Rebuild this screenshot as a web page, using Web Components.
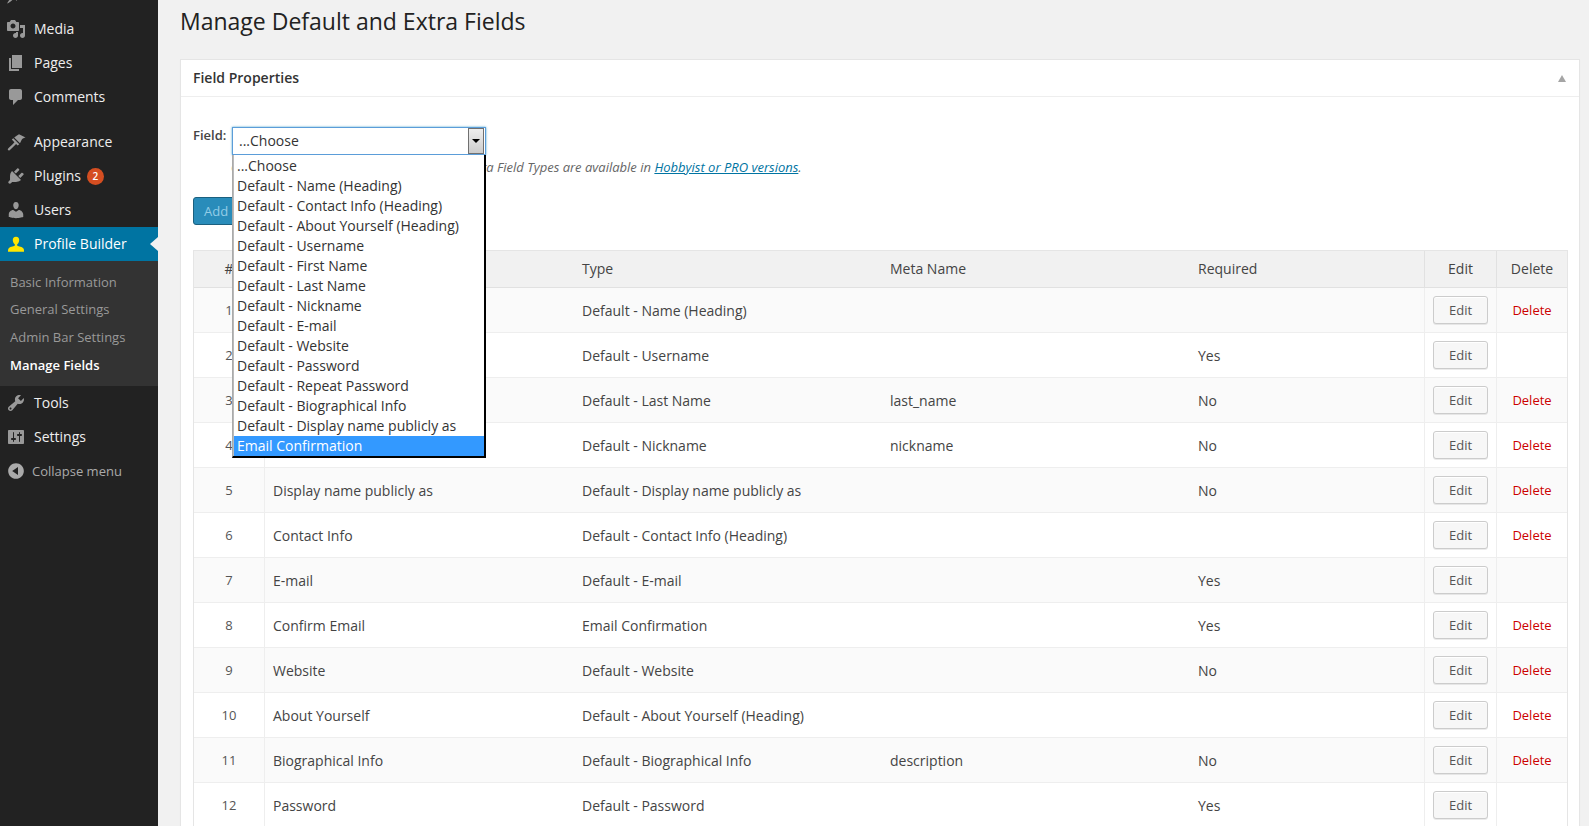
<!doctype html>
<html><head><meta charset="utf-8"><title>Manage Fields</title>
<style>
html,body{margin:0;padding:0;height:826px;overflow:hidden;background:#f1f1f1;font-family:"Open Sans",sans-serif;font-size:14px;color:#444}
</style></head><body>
<wp-admin>
  <wp-sidebar>
    <wp-menu-item icon="post"></wp-menu-item>
    <wp-menu-item icon="media">Media</wp-menu-item>
    <wp-menu-item icon="page">Pages</wp-menu-item>
    <wp-menu-item icon="comment">Comments</wp-menu-item>
    <wp-menu-item icon="appearance" sep>Appearance</wp-menu-item>
    <wp-menu-item icon="plugin" badge="2">Plugins</wp-menu-item>
    <wp-menu-item icon="users">Users</wp-menu-item>
    <wp-menu-item icon="profile" active>Profile Builder</wp-menu-item>
    <wp-submenu>
      <wp-sub-item>Basic Information</wp-sub-item>
      <wp-sub-item>General Settings</wp-sub-item>
      <wp-sub-item>Admin Bar Settings</wp-sub-item>
      <wp-sub-item current>Manage Fields</wp-sub-item>
    </wp-submenu>
    <wp-menu-item icon="tools">Tools</wp-menu-item>
    <wp-menu-item icon="settings">Settings</wp-menu-item>
    <wp-menu-item icon="collapse" small>Collapse menu</wp-menu-item>
  </wp-sidebar>
  <wp-main>
    <span slot="title">Manage Default and Extra Fields</span>
    <wp-card>
      <span slot="title">Field Properties</span>
      <pb-field-form></pb-field-form>
      <pb-table></pb-table>
    </wp-card>
  </wp-main>
</wp-admin>
<script>
const P={
post:"M10.44 3.02l1.82-1.82 6.36 6.35-1.83 1.82c-1.05-.68-2.48-.57-3.41.36l-.75.75c-.92.93-1.04 2.35-.35 3.41l-1.83 1.82-2.41-2.41-2.8 2.79c-.42.42-3.38 2.71-3.8 2.29s1.86-3.39 2.28-3.81l2.79-2.79L4.1 9.36l1.83-1.82c1.05.69 2.48.57 3.4-.36l.75-.75c.93-.92 1.05-2.35.37-3.41z",
media:"M13 11V4c0-.55-.45-1-1-1h-1.67L9 1H5L3.67 3H2c-.55 0-1 .45-1 1v7c0 .55.45 1 1 1h10c.55 0 1-.45 1-1zM7 4.5c1.38 0 2.5 1.12 2.5 2.5S8.38 9.5 7 9.5 4.5 8.38 4.5 7 5.62 4.5 7 4.5zM14 6h5v10.5c0 1.38-1.12 2.5-2.5 2.5S14 17.88 14 16.5s1.12-2.5 2.5-2.5c.17 0 .34.02.5.05V9h-3V6zm-4 8.05V13h2v3.5c0 1.38-1.12 2.5-2.5 2.5S7 17.88 7 16.5 8.12 14 9.5 14c.17 0 .34.02.5.05z",
page:"M6 15V2h10v13H6zm-1 1h8v2H3V5h2v11z",
comment:"M5 2h9c1.1 0 2 .9 2 2v7c0 1.1-.9 2-2 2h-2l-5 5v-5H5c-1.1 0-2-.9-2-2V4c0-1.1.9-2 2-2z",
appearance:"M13 2.2l6.6 3.2c-1.5.5-2.900.6-3.900 2.400L14 11.300 8.200 5.500 11 3.600zM7.300 6.200l6 6-1.700 1.300-1.500-1.400-1.500 1.300c-1.600 1.400-3.500 3.700-5 4.900-.9.800-2.400-.6-1.600-1.500 1.300-1.600 3.700-3.500 5.100-5.100l1.300-1.400-2.600-2.900z",
plugin:"M13.11 4.36L9.87 7.6 8 5.73l3.24-3.24c.35-.34 1.05-.2 1.56.32.52.51.66 1.21.31 1.55zm-8 1.77l.91-1.12 9.01 9.01-1.19.84c-.71.71-2.63 1.16-3.82 1.16H6.14L4.9 17.26c-.59.59-1.54.59-2.12 0-.59-.58-.59-1.53 0-2.12l1.24-1.24v-3.88c0-1.13.4-3.19 1.09-3.89zm7.26 3.97l3.24-3.24c.34-.35 1.04-.21 1.55.31.52.51.66 1.21.31 1.55l-3.24 3.25z",
users:"M10 9.25c-2.27 0-2.73-3.44-2.73-3.44C7 4.02 7.82 2 9.97 2c2.16 0 2.98 2.02 2.71 3.81 0 0-.41 3.44-2.68 3.44zm0 2.57L12.72 10c2.39 0 4.52 2.33 4.52 4.53v2.49s-3.65 1.13-7.24 1.13c-3.65 0-7.24-1.13-7.24-1.13v-2.49c0-2.25 1.94-4.48 4.47-4.48z",
profile:"M10 2.700c2.200 0 3.400 1.700 3.200 3.800-.2 1.900-1.200 3.200-2 3.800v1.300c0 .6 4.300 1.300 5.800 2.300 1 .7 1 2.200 1 3.900H2c0-1.700 0-3.200 1-3.900 1.500-1 5.800-1.700 5.800-2.300v-1.300c-.8-.6-1.800-1.900-2-3.800C6.600 4.400 7.800 2.700 10 2.700z",
tools:"M16.68 9.77c-1.34 1.34-3.3 1.67-4.95.99l-5.41 6.52c-.99.99-2.59.99-3.58 0s-.99-2.59 0-3.57l6.52-5.42c-.68-1.65-.35-3.61.99-4.95 1.28-1.28 3.12-1.62 4.72-1.06l-2.89 2.89 2.82 2.82 2.86-2.87c.53 1.58.18 3.39-1.08 4.65zM3.81 16.21c.4.39 1.04.39 1.43 0 .4-.4.4-1.04 0-1.43-.39-.4-1.03-.4-1.43 0-.39.39-.39 1.03 0 1.43z",
settings:"M18 16V4c0-.55-.45-1-1-1H3c-.55 0-1 .45-1 1v12c0 .55.45 1 1 1h14c.55 0 1-.45 1-1zM8 11h1c.55 0 1 .45 1 1s-.45 1-1 1H8v1.5c0 .28-.22.5-.5.5s-.5-.22-.5-.5V13H6c-.55 0-1-.45-1-1s.45-1 1-1h1V5.5c0-.28.22-.5.5-.5s.5.22.5.5V11zm5-2h-1c-.55 0-1-.45-1-1s.45-1 1-1h1V5.5c0-.28.22-.5.5-.5s.5.22.5.5V7h1c.55 0 1 .45 1 1s-.45 1-1 1h-1v5.5c0 .28-.22.5-.5.5s-.5-.22-.5-.5V9z",
collapse:"M10 2.16c4.33 0 7.84 3.51 7.84 7.84s-3.51 7.84-7.84 7.84S2.16 14.33 2.16 10 5.71 2.16 10 2.16zm2 11.72V6.12L6.18 9.97z"
};
function def(name,css,html){
  customElements.define(name,class extends HTMLElement{
    connectedCallback(){
      if(this.shadowRoot)return;
      const r=this.attachShadow({mode:"open"});
      r.innerHTML="<style>"+css+"</style>"+(typeof html==="function"?html(this):html);
    }
  });
}
def("wp-admin",":host{display:flex;height:826px;overflow:hidden}","<slot></slot>");
def("wp-sidebar",":host{display:block;width:158px;flex:none;background:#222;height:826px;overflow:hidden}.in{margin-top:-22px}","<div class=in><slot></slot></div>");
def("wp-menu-item",
`:host{display:flex;align-items:center;height:34px;color:#eee;font-size:14px;position:relative;padding-left:6px}
:host([sep]){margin-top:11px}
:host([active]){background:#0074a2;color:#fff}
:host([active])::after{content:"";position:absolute;right:0;top:10px;width:0;height:0;border-style:solid;border-color:transparent #f1f1f1 transparent transparent;border-width:7px 8px 7px 0}
svg{width:20px;height:20px;fill:#999;flex:none;margin-right:8px}
.t{margin-top:-2px}
:host([active]) svg{fill:#ffe600}
:host([small]){font-size:13px;color:#aaa}
:host([small]) .t{margin-top:0}
:host([small]) svg{margin-right:6px;fill:#aaa}
.b{display:inline-block;margin-left:6px;width:17px;height:17px;border-radius:50%;background:#d54e21;color:#fff;font-size:10px;line-height:17px;text-align:center;font-weight:600}`,
h=>`<svg viewBox="0 0 20 20"><path fill-rule="evenodd" d="${P[h.getAttribute("icon")]}"/></svg><span class=t><slot></slot></span>${h.hasAttribute("badge")?`<span class=b>${h.getAttribute("badge")}</span>`:""}`);
def("wp-submenu",":host{display:block;background:#333;height:125px;box-sizing:border-box;padding:7px 0 7px}","<slot></slot>");
def("wp-sub-item",":host{display:flex;align-items:center;height:27.5px;padding-left:10px;font-size:13px;color:#999}:host([current]){color:#fff;font-weight:600;margin-top:1px}","<slot></slot>");
def("wp-main",":host{display:block;flex:1;min-width:0;padding:0 9px 0 22px}h2{margin:0;height:59px;box-sizing:border-box;padding-top:3px;font-size:23px;line-height:36px;font-weight:400;color:#222}",'<h2><slot name="title"></slot></h2><slot></slot>');
def("wp-card",`:host{display:block;background:#fff;border:1px solid #e5e5e5;box-shadow:0 1px 1px rgba(0,0,0,.04);position:relative}
header{height:36px;border-bottom:1px solid #eee;display:flex;align-items:center;justify-content:space-between;padding:0 13px 0 12px;font-weight:600;font-size:14px;color:#333}
span{margin-top:-2px}
i{display:block;border:4px solid transparent;border-top:0;border-bottom:7px solid #a5a5a5;width:0;height:0}
.b{padding:0 11px 0 12px}`,
'<header><span><slot name="title"></slot></span><i></i></header><div class=b><slot></slot></div>');
def("pb-field-form",`:host{display:block;height:153px;position:relative;z-index:2;box-sizing:border-box;padding-top:30px}
.top{display:flex;align-items:flex-start}
label{width:39px;font-weight:600;line-height:17px;color:#444;font-size:13px}
.note{margin:-1px 0 0 38px;font-style:italic;font-size:13px;color:#666;line-height:18px;height:18px;white-space:nowrap}
.note a{color:#0074a2;text-decoration:underline}
button{display:block;margin-top:21px;height:28px;padding:0 10px;font:13px "Open Sans",sans-serif;color:#94cde7;background:#298cba;border:1px solid #1b607f;border-radius:3px;box-sizing:border-box}`,
`<div class=top><label>Field:</label><pb-select></pb-select></div>
<div class=note>Choose one of the supported field types. Extra Field Types are available in <a href="#">Hobbyist or PRO versions</a>.</div>
<button>Add Field</button>`);
def("pb-select",`:host{display:block;position:relative;width:254px;height:28px;margin-bottom:4px}
.box{height:28px;box-sizing:border-box;border:1px solid #5b9dd9;box-shadow:0 0 2px rgba(30,140,190,.8);background:#fff;display:flex;justify-content:space-between;align-items:center;padding:0 1px 0 6px;font-size:14px;color:#333}
.box span:first-child{margin-top:-2px}
.arr{width:16px;height:26px;border:1px solid #707070;box-sizing:border-box;background:linear-gradient(#eee,#ccc);display:flex;align-items:center;justify-content:center}
.arr i{display:block;border:4px solid transparent;border-bottom:0;border-top:4px solid #000;width:0;height:0}
.list{position:absolute;left:0;top:28px;width:254px;height:303px;box-sizing:border-box;background:#fff;border:solid #000;border-width:0 2px 2px 1px;border-left-color:#aaa;box-shadow:inset 1px 0 0 #bbb;padding:1px 0 0 1px;font-size:14px;color:#333;z-index:5}
.o{height:20px;line-height:20px;padding-left:3px;white-space:nowrap}
.o.s{background:#3399ff;color:#fff}`,
`<div class=box><span>...Choose</span><span class=arr><i></i></span></div><div class=list>${["...Choose","Default - Name (Heading)","Default - Contact Info (Heading)","Default - About Yourself (Heading)","Default - Username","Default - First Name","Default - Last Name","Default - Nickname","Default - E-mail","Default - Website","Default - Password","Default - Repeat Password","Default - Biographical Info","Default - Display name publicly as"].map(t=>`<div class=o>${t}</div>`).join("")}<div class="o s">Email Confirmation</div></div>`);
const rows=[
["Name","Default - Name (Heading)","","",1],
["Username","Default - Username","","Yes",0],
["Last Name","Default - Last Name","last_name","No",1],
["Nickname","Default - Nickname","nickname","No",1],
["Display name publicly as","Default - Display name publicly as","","No",1],
["Contact Info","Default - Contact Info (Heading)","","",1],
["E-mail","Default - E-mail","","Yes",0],
["Confirm Email","Email Confirmation","","Yes",1],
["Website","Default - Website","","No",1],
["About Yourself","Default - About Yourself (Heading)","","",1],
["Biographical Info","Default - Biographical Info","description","No",1],
["Password","Default - Password","","Yes",0]];
const GRID="display:grid;grid-template-columns:71px 309px 308px 308px 234px 72px 71px;";
def("pb-table",`:host{display:block;border:1px solid #e5e5e5;border-bottom:0;box-sizing:border-box;width:1375px;color:#444}
.r{${GRID}height:45px;box-sizing:border-box;border-bottom:1px solid #eee;align-items:stretch;background:#fff}
.r.odd{background:#fafafa}
.r.h{height:37px;background:#f1f1f1;border-bottom:1px solid #e1e1e1}
.c{display:flex;align-items:center;padding-left:8px;min-width:0;font-size:14px;white-space:nowrap}
.h .c{padding-bottom:2px}
.n{justify-content:center;padding:0;border-right:1px solid #eee;font-size:13px;color:#555}
.h .n{font-size:14px;border-color:#e1e1e1;color:#444}
.e,.d{justify-content:center;padding:0;border-left:1px solid #eee}
.h .e,.h .d{border-color:#e1e1e1;font-size:14px}
.d{color:#c00;font-size:13px}.h .d{color:#444}
button{width:55px;height:28px;box-sizing:border-box;border:1px solid #ccc;border-radius:3px;background:#f7f7f7;box-shadow:inset 0 1px 0 #fff,0 1px 0 rgba(0,0,0,.08);font:13px "Open Sans",sans-serif;color:#555;padding:0}
.e button{align-self:center}`,
`<div class="r h"><div class="c n">#</div><div class="c t">Title</div><div class=c>Type</div><div class=c>Meta Name</div><div class=c>Required</div><div class="c e">Edit</div><div class="c d">Delete</div></div>`+
rows.map((r,i)=>`<div class="r ${i%2==0?"odd":""}"><div class="c n">${i+1}</div><div class="c t">${r[0]}</div><div class=c>${r[1]}</div><div class=c>${r[2]}</div><div class=c>${r[3]}</div><div class="c e"><button>Edit</button></div><div class="c d">${r[4]?"Delete":""}</div></div>`).join(""));
</script>
</body></html>
